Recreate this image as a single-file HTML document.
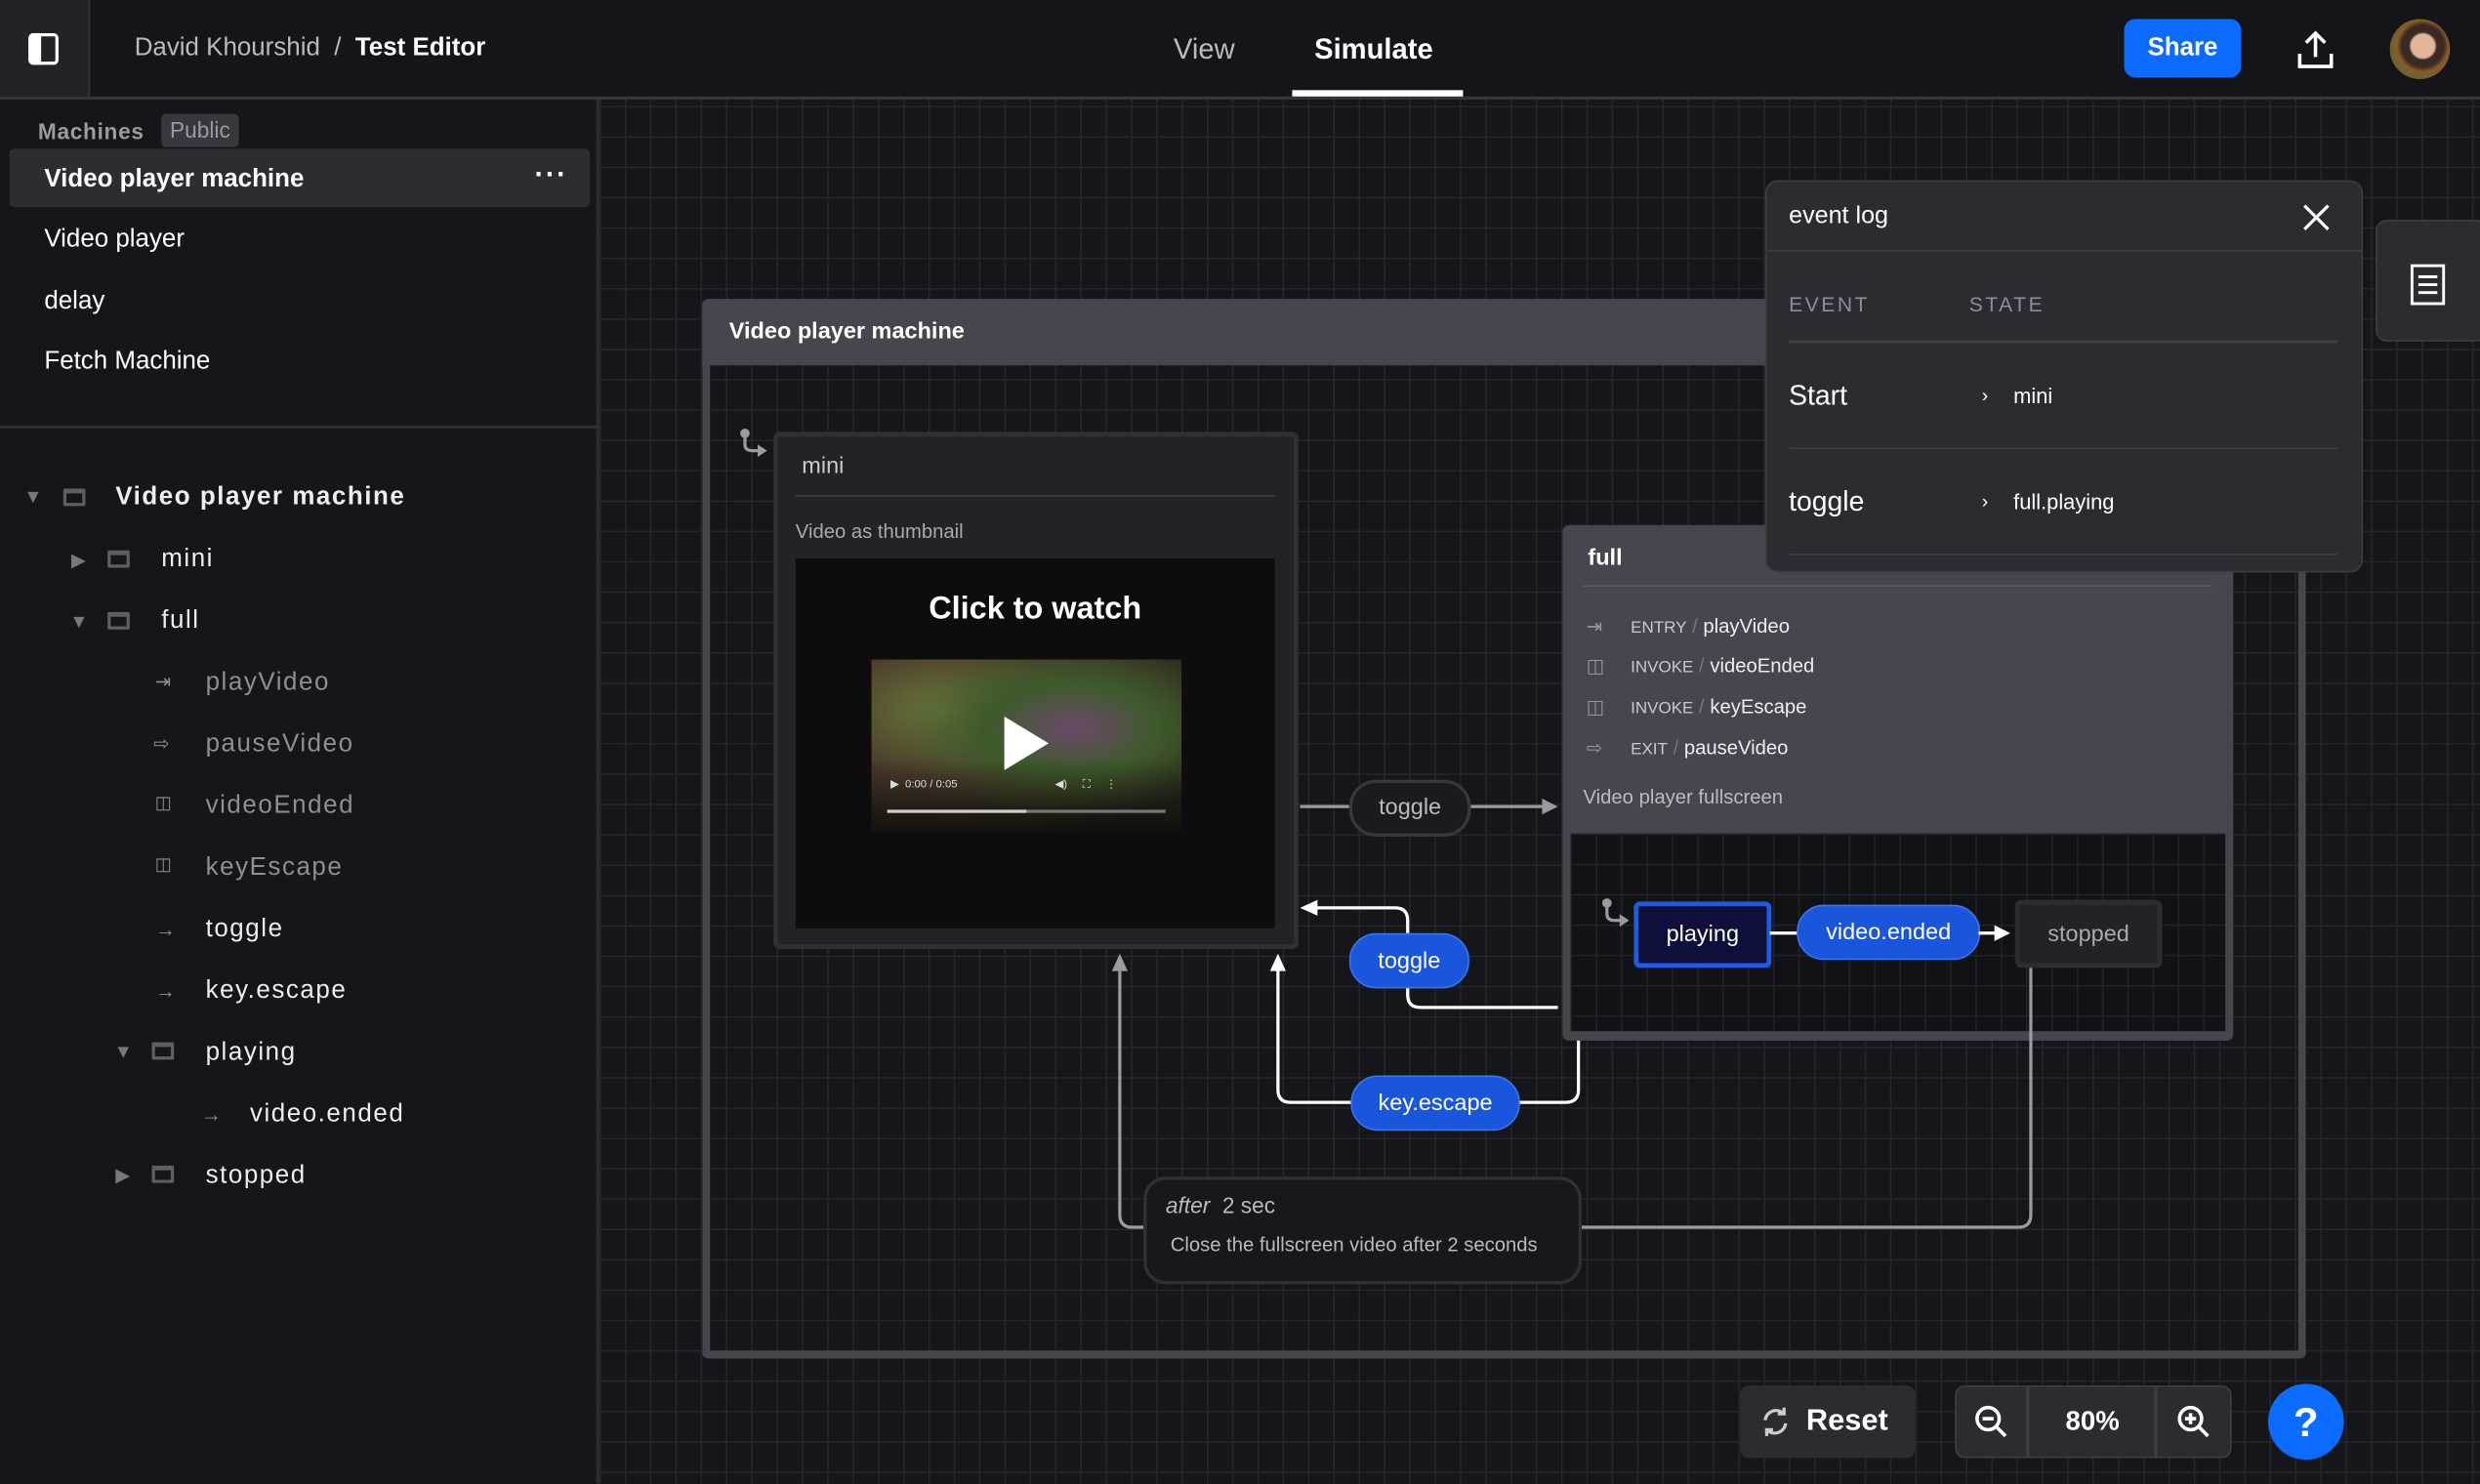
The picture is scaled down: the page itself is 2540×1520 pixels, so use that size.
<!DOCTYPE html>
<html><head><meta charset="utf-8"><style>
*{box-sizing:border-box;margin:0;padding:0}
html,body{width:2540px;height:1520px;overflow:hidden;background:#151619}
#s{position:absolute;left:0;top:0;width:1568px;height:938px;transform:scale(1.619898);transform-origin:0 0;font-family:"Liberation Sans",sans-serif;color:#fff;background:#151619}
.a{position:absolute}
.t{position:absolute;white-space:nowrap;line-height:1}
#hdr{left:0;top:0;width:1568px;height:63px;background:#141518;border-bottom:2px solid #35363b}
#canvas{left:379px;top:63px;width:1189px;height:875px;background-color:#151619;
background-image:linear-gradient(to right,#26272b 1px,transparent 1px),linear-gradient(to bottom,#26272b 1px,transparent 1px);
background-size:16px 19.2px;background-position:0 4px}
#side{left:0;top:63px;width:379px;height:875px;background:#151619;border-right:2px solid #2c2d31}
.tr{font-size:16px;letter-spacing:.06em;color:#eee}
.dim{color:#8e8e96}
.ic{position:absolute;width:14px;height:11px;border:2px solid #5d5e66;border-top-width:3px;border-radius:1px}
.pill{position:absolute;border-radius:17px;display:flex;align-items:center;justify-content:center;font-size:14.5px}
.blue{background:#1a56db;border:1px solid #3b74f0;color:#fff}
</style></head><body><div id="s">

<div id="hdr" class="a">
 <div class="a" style="left:0;top:0;width:57px;height:61px;background:#222327;border-right:1px solid #333"></div>
 <div class="a" style="left:18px;top:21px;width:19px;height:20px;border:2.5px solid #fff;border-radius:3px"></div>
 <div class="a" style="left:18px;top:21px;width:8px;height:20px;background:#fff;border-radius:3px 0 0 3px"></div>
 <div class="t" style="left:85px;top:23px;font-size:16px;color:#bbb">David Khourshid &nbsp;/&nbsp; <span style="color:#fff;font-weight:600">Test Editor</span></div>
 <div class="t" style="left:742px;top:22px;font-size:18px;color:#bbb">View</div>
 <div class="t" style="left:831px;top:22px;font-size:18px;font-weight:bold">Simulate</div>
 <div class="a" style="left:817px;top:57px;width:108px;height:4px;background:#fff"></div>
 <div class="a" style="left:1343px;top:12px;width:74px;height:37px;background:#0b6cff;border-radius:7px;font-size:16px;font-weight:bold;display:flex;align-items:center;justify-content:center">Share</div>
 <svg class="a" style="left:1452px;top:19px" width="24" height="26" viewBox="0 0 24 26" fill="none" stroke="#fff" stroke-width="2.2"><path d="M12 17V2M6 8l6-6 6 6M2 15v8h20v-8"/></svg>
 <div class="a" style="left:1511px;top:12px;width:38px;height:38px;border-radius:50%;background:radial-gradient(circle at 55% 45%,#e0b59a 0 25%,#3b2a22 30% 45%,#8a5a2a 55%,#556b2f 80%)"></div>
</div>

<div id="side" class="a">
 <div class="t" style="left:24px;top:13px;font-size:14px;font-weight:600;color:#9a9aa2;letter-spacing:.03em">Machines</div>
 <div class="a" style="left:102px;top:9px;width:49px;height:21px;background:#37383d;border-radius:3px;font-size:14px;color:#9a9aa2;text-align:center;line-height:21px">Public</div>
 <div class="a" style="left:6px;top:31px;width:367px;height:37px;background:#2c2d32;border-radius:3px"></div>
 <div class="t" style="left:28px;top:43px;font-size:16px;font-weight:bold">Video player machine</div>
 <div class="t" style="left:338px;top:38px;font-size:18px;font-weight:bold;letter-spacing:1px">···</div>
 <div class="t" style="left:28px;top:81px;font-size:16px">Video player</div>
 <div class="t" style="left:28px;top:120px;font-size:16px">delay</div>
 <div class="t" style="left:28px;top:158px;font-size:16px">Fetch Machine</div>
 <div class="a" style="left:0;top:206px;width:379px;height:2px;background:#2e2f33"></div>
 <!-- tree -->
 <div class="t" style="left:15px;top:245px;color:#77777f;font-size:12px">▼</div><div class="ic" style="left:40px;top:246px"></div>
 <div class="t tr" style="left:73px;top:244px;font-weight:bold">Video player machine</div>
 <div class="t" style="left:45px;top:285px;color:#77777f;font-size:12px">▶</div><div class="ic" style="left:68px;top:285px"></div>
 <div class="t tr" style="left:102px;top:283px">mini</div>
 <div class="t" style="left:44px;top:324px;color:#77777f;font-size:12px">▼</div><div class="ic" style="left:68px;top:324px"></div>
 <div class="t tr" style="left:102px;top:322px">full</div>
 <div class="t dim" style="left:98px;top:362px;font-size:12px">⇥</div><div class="t tr dim" style="left:130px;top:361px">playVideo</div>
 <div class="t dim" style="left:97px;top:401px;font-size:12px">⇨</div><div class="t tr dim" style="left:130px;top:400px">pauseVideo</div>
 <div class="t dim" style="left:98px;top:440px;font-size:11px">◫</div><div class="t tr dim" style="left:130px;top:439px">videoEnded</div>
 <div class="t dim" style="left:98px;top:479px;font-size:11px">◫</div><div class="t tr dim" style="left:130px;top:478px">keyEscape</div>
 <div class="t dim" style="left:98px;top:518px;font-size:13px">→</div><div class="t tr" style="left:130px;top:517px">toggle</div>
 <div class="t dim" style="left:98px;top:557px;font-size:13px">→</div><div class="t tr" style="left:130px;top:556px">key.escape</div>
 <div class="t" style="left:72px;top:596px;color:#77777f;font-size:12px">▼</div><div class="ic" style="left:96px;top:596px"></div>
 <div class="t tr" style="left:130px;top:595px">playing</div>
 <div class="t dim" style="left:127px;top:635px;font-size:13px">→</div><div class="t tr" style="left:158px;top:634px">video.ended</div>
 <div class="t" style="left:73px;top:674px;color:#77777f;font-size:12px">▶</div><div class="ic" style="left:96px;top:674px"></div>
 <div class="t tr" style="left:130px;top:673px">stopped</div>
</div>

<div id="canvas" class="a"></div>

<!-- machine box -->
<div class="a" style="left:444px;top:189px;width:1014px;height:670px;border:5px solid #46464e;border-top:0;border-radius:4px"></div>
<div class="a" style="left:444px;top:189px;width:1014px;height:42px;background:#46464e;border-radius:4px 4px 0 0"></div>
<div class="t" style="left:461px;top:203px;font-size:14.5px;font-weight:600">Video player machine</div>

<!-- mini -->
<div class="a" style="left:489px;top:273px;width:332px;height:327px;background:#222327;border:3px solid #2f3035;border-radius:4px"></div>
<div class="t" style="left:507px;top:288px;font-size:14.5px;color:#ccc">mini</div>
<div class="a" style="left:503px;top:313px;width:303px;height:1px;background:#3e3f45"></div>
<div class="t" style="left:503px;top:330px;font-size:12.5px;color:#aaa">Video as thumbnail</div>
<div class="a" style="left:503px;top:353px;width:303px;height:234px;background:#0d0d0d"></div>
<div class="t" style="left:503px;top:375px;width:303px;text-align:center;font-size:20px;font-weight:bold">Click to watch</div>
<div class="a" style="left:551px;top:417px;width:196px;height:109px;background:radial-gradient(ellipse at 65% 40%,#6b4a6a 0,#3d5a2a 30%,transparent 60%),radial-gradient(ellipse at 25% 30%,#6a7a3a 0,#4a3a2a 40%,#2a2a1e 80%);"></div>
<div class="a" style="left:551px;top:480px;width:196px;height:46px;background:linear-gradient(transparent,rgba(0,0,0,.6))"></div>
<svg class="a" style="left:634px;top:453px" width="30" height="34"><path d="M1 0L29 17L1 34Z" fill="#fff"/></svg>
<div class="t" style="left:563px;top:493px;font-size:7px;color:#ddd">▶ &nbsp;0:00 / 0:05</div>
<div class="t" style="left:667px;top:493px;font-size:7px;color:#ddd">◀) &nbsp; &nbsp; ⛶ &nbsp; &nbsp; ⋮</div>
<div class="a" style="left:561px;top:512px;width:176px;height:2px;background:#777"></div>
<div class="a" style="left:561px;top:512px;width:88px;height:2px;background:#ccc"></div>
<svg class="a" style="left:466px;top:270px" width="22" height="20"><circle cx="5" cy="4" r="3" fill="#9a9aa2"/><path d="M5 6v5q0 4 5 4h4" stroke="#9a9aa2" stroke-width="2" fill="none"/><path d="M13 11l6 4-6 4z" fill="#9a9aa2"/></svg>

<!-- full -->
<div class="a" style="left:988px;top:332px;width:424px;height:326px;background:#46464e;border-radius:4px"></div>
<div class="a" style="left:993px;top:527px;width:414px;height:125px;background:#111215;background-image:linear-gradient(to right,#222327 1px,transparent 1px),linear-gradient(to bottom,#222327 1px,transparent 1px);background-size:16px 19.2px"></div>
<div class="t" style="left:1004px;top:346px;font-size:14.5px;font-weight:600">full</div>
<div class="a" style="left:1001px;top:370px;width:397px;height:1px;background:#5a5b63"></div>
<div class="t" style="left:1003px;top:390px;font-size:12px;color:#999">⇥</div>
<div class="t" style="left:1031px;top:390px;font-size:12.5px;color:#eee"><span style="font-size:10.5px;color:#c8c8cf">ENTRY</span> <span style="color:#777">/</span> playVideo</div>
<div class="t" style="left:1003px;top:415px;font-size:12px;color:#999">◫</div>
<div class="t" style="left:1031px;top:415px;font-size:12.5px;color:#eee"><span style="font-size:10.5px;color:#c8c8cf">INVOKE</span> <span style="color:#777">/</span> videoEnded</div>
<div class="t" style="left:1003px;top:441px;font-size:12px;color:#999">◫</div>
<div class="t" style="left:1031px;top:441px;font-size:12.5px;color:#eee"><span style="font-size:10.5px;color:#c8c8cf">INVOKE</span> <span style="color:#777">/</span> keyEscape</div>
<div class="t" style="left:1003px;top:467px;font-size:12px;color:#999">⇨</div>
<div class="t" style="left:1031px;top:467px;font-size:12.5px;color:#eee"><span style="font-size:10.5px;color:#c8c8cf">EXIT</span> <span style="color:#777">/</span> pauseVideo</div>
<div class="t" style="left:1001px;top:498px;font-size:12.5px;color:#bbb">Video player fullscreen</div>
<svg class="a" style="left:1011px;top:567px" width="22" height="20"><circle cx="5" cy="4" r="3" fill="#9a9aa2"/><path d="M5 6v5q0 4 5 4h4" stroke="#9a9aa2" stroke-width="2" fill="none"/><path d="M13 11l6 4-6 4z" fill="#9a9aa2"/></svg>
<div class="a" style="left:1033px;top:570px;width:87px;height:42px;background:#0e0f3a;border:3px solid #1f5ae6;border-radius:4px;font-size:14.5px;display:flex;align-items:center;justify-content:center">playing</div>
<div class="pill blue" style="left:1136px;top:572px;width:116px;height:35px">video.ended</div>
<div class="a" style="left:1274px;top:569px;width:93px;height:43px;background:#222327;border:3px solid #2c2d31;border-radius:4px;font-size:14.5px;color:#aaa;display:flex;align-items:center;justify-content:center">stopped</div>

<!-- edges -->
<svg class="a" style="left:0;top:0" width="1568" height="938" fill="none">
 <g stroke="#9a9aa2" stroke-width="2">
  <path d="M822 510H853M929 510H975"/>
  <path d="M1284 612V768Q1284 776 1276 776H1000M723 776H716Q708 776 708 768V612"/>
 </g>
 <path d="M975 505L985 510L975 515Z" fill="#9a9aa2"/>
 <path d="M703 614L708 603L713 614Z" fill="#9a9aa2"/>
 <g stroke="#fff" stroke-width="2">
  <path d="M985 637H898Q890 637 890 629V624M890 590V582Q890 574 882 574H832"/>
  <path d="M998 658V689Q998 697 990 697H960M854 697H816Q808 697 808 689V612"/>
  <path d="M1119 590H1136M1251 590H1262"/>
 </g>
 <path d="M833 569L822 574L833 579Z" fill="#fff"/>
 <path d="M803 614L808 603L813 614Z" fill="#fff"/>
 <path d="M1261 585L1271 590L1261 595Z" fill="#fff"/>
</svg>
<div class="pill" style="left:853px;top:493px;width:77px;height:36px;background:#1a1b1e;border:2px solid #38393e;color:#bbb">toggle</div>
<div class="pill blue" style="left:853px;top:590px;width:76px;height:35px">toggle</div>
<div class="pill blue" style="left:854px;top:680px;width:107px;height:35px">key.escape</div>
<div class="a" style="left:723px;top:744px;width:277px;height:68px;background:#17181b;border:2px solid #303136;border-radius:14px"></div>
<div class="t" style="left:737px;top:755px;font-size:14px;color:#bbb"><i>after</i>&nbsp; 2 sec</div>
<div class="t" style="left:740px;top:781px;font-size:12.5px;color:#bbb">Close the fullscreen video after 2 seconds</div>

<!-- event log -->
<div class="a" style="left:1116px;top:114px;width:378px;height:248px;background:#2b2c31;border:1px solid #3d3e44;border-radius:8px"></div>
<div class="a" style="left:1117px;top:158px;width:376px;height:1px;background:#3d3e44"></div>
<div class="t" style="left:1131px;top:129px;font-size:15.5px">event log</div>
<svg class="a" style="left:1456px;top:129px" width="17" height="17" stroke="#fff" stroke-width="2"><path d="M1 1L16 16M16 1L1 16"/></svg>
<div class="t" style="left:1131px;top:186px;font-size:13px;color:#8e8e96;letter-spacing:.12em">EVENT</div>
<div class="t" style="left:1245px;top:186px;font-size:13px;color:#8e8e96;letter-spacing:.12em">STATE</div>
<div class="a" style="left:1131px;top:215px;width:347px;height:2px;background:#3d3e44"></div>
<div class="t" style="left:1131px;top:242px;font-size:17.5px">Start</div>
<div class="t" style="left:1253px;top:244px;font-size:12px">›</div>
<div class="t" style="left:1273px;top:244px;font-size:13.5px">mini</div>
<div class="a" style="left:1131px;top:283px;width:347px;height:1px;background:#3d3e44"></div>
<div class="t" style="left:1131px;top:309px;font-size:17.5px">toggle</div>
<div class="t" style="left:1253px;top:311px;font-size:12px">›</div>
<div class="t" style="left:1273px;top:311px;font-size:13.5px">full.playing</div>
<div class="a" style="left:1131px;top:350px;width:347px;height:1px;background:#3d3e44"></div>

<div class="a" style="left:1502px;top:139px;width:70px;height:77px;background:#2b2c31;border:1px solid #3d3e44;border-radius:7px"></div>
<svg class="a" style="left:1524px;top:167px" width="22" height="26" fill="none" stroke="#fff" stroke-width="1.8"><rect x="1" y="1" width="20" height="24"/><path d="M5 8H17M5 13H17M5 18H17"/></svg>

<!-- bottom controls -->
<div class="a" style="left:1100px;top:876px;width:111px;height:46px;background:#2b2c31;border-radius:6px"></div>
<svg class="a" style="left:1113px;top:889px" width="19" height="20" fill="none" stroke="#ccc" stroke-width="2"><path d="M3 9A7 7 0 0 1 15 5M16 11A7 7 0 0 1 4 15"/><path d="M15 1V5H11M4 19V15H8"/></svg>
<div class="t" style="left:1142px;top:889px;font-size:19px;font-weight:600">Reset</div>
<div class="a" style="left:1236px;top:876px;width:175px;height:46px;background:#2b2c31;border:1px solid #3d3e44;border-radius:6px"></div>
<div class="a" style="left:1281px;top:877px;width:2px;height:44px;background:#3d3e44"></div>
<div class="a" style="left:1362px;top:877px;width:2px;height:44px;background:#3d3e44"></div>
<svg class="a" style="left:1248px;top:888px" width="22" height="22" fill="none" stroke="#fff" stroke-width="2.2"><circle cx="9" cy="9" r="7"/><path d="M14 14L20 20M5.5 9H12.5"/></svg>
<svg class="a" style="left:1376px;top:888px" width="22" height="22" fill="none" stroke="#fff" stroke-width="2.2"><circle cx="9" cy="9" r="7"/><path d="M14 14L20 20M5.5 9H12.5M9 5.5V12.5"/></svg>
<div class="t" style="left:1283px;top:890px;width:80px;text-align:center;font-size:17px;font-weight:600">80%</div>
<div class="a" style="left:1434px;top:875px;width:48px;height:48px;border-radius:50%;background:#0b6cff;font-size:26px;font-weight:bold;display:flex;align-items:center;justify-content:center">?</div>

</div></body></html>
